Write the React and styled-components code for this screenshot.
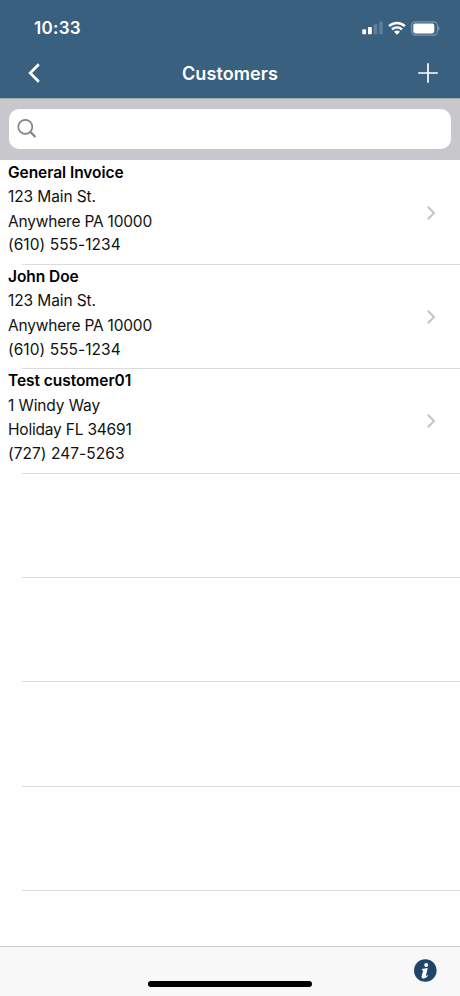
import styled, { createGlobalStyle } from 'styled-components'

const GlobalStyle = createGlobalStyle`
  * {
    box-sizing: border-box;
  }
  body {
    margin: 0;
    background: #fff;
    font-family: Inter, 'Liberation Sans', sans-serif;
  }
`

const Screen = styled.div`
  display: flex;
  flex-direction: column;
  width: 460px;
  height: 996px;
  overflow: hidden;
  background: #fff;
`

const Header = styled.header`
  height: 98px;
  flex: none;
  background: #3a6080;
  color: #fff;
`

const StatusBar = styled.div`
  display: flex;
  align-items: center;
  justify-content: space-between;
  height: 48px;
  padding: 8px 20px 0 34px;
`

const Time = styled.span`
  font-size: 17px;
  font-weight: 600;
  line-height: 20px;
  letter-spacing: 0.3px;
`

const StatusIcons = styled.div`
  display: flex;
  align-items: center;
  gap: 5px;
`

const NavBar = styled.nav`
  display: grid;
  grid-template-columns: 60px 1fr 60px;
  align-items: center;
  height: 50px;
`

const NavButton = styled.button`
  display: flex;
  justify-content: ${({ $end }) => ($end ? 'flex-end' : 'flex-start')};
  padding: ${({ $end }) => ($end ? '0 22px 0 0' : '0 0 0 28px')};
  border: 0;
  background: none;
  color: inherit;
`

const Title = styled.h1`
  margin: 0;
  padding-top: 2px;
  font-size: 18px;
  font-weight: 600;
  line-height: 24px;
  letter-spacing: 0.1px;
  text-align: center;
`

const SearchBar = styled.div`
  height: 62px;
  flex: none;
  padding: 10px 9px 11px;
  border-top: 1px solid #a9adb2;
  background: #c8c8cc;
`

const SearchField = styled.label`
  display: flex;
  align-items: center;
  height: 40px;
  padding-left: 8px;
  border-radius: 10px;
  background: #fff;
`

const SearchInput = styled.input`
  flex: 1;
  height: 100%;
  border: 0;
  outline: 0;
  background: transparent;
  font: inherit;
`

const List = styled.ul`
  flex: 1;
  min-height: 0;
  margin: 0;
  padding: 0.5px 0 0;
  overflow: hidden;
  list-style: none;
`

const Row = styled.li`
  display: flex;
  align-items: center;
  justify-content: space-between;
  height: 104.4px;
  padding: 0 24px 0 8px;
  background: linear-gradient(#dcdcde, #dcdcde) 22px 100% / 100% 1px no-repeat;
`

const Details = styled.div`
  align-self: flex-start;
  color: #111;
  font-size: 15.5px;
  line-height: 24.6px;
  white-space: nowrap;
`

const Name = styled.div`
  color: #000;
  font-weight: 600;
  letter-spacing: -0.05px;
`

const Line = styled.div`
  letter-spacing: ${({ $spacing }) => $spacing || '-0.1px'};
`

const Phone = styled.div`
  line-height: 21px;
  letter-spacing: 0.05px;
`

const Footer = styled.footer`
  display: grid;
  grid-template-columns: 1fr 164px 1fr;
  height: 50px;
  flex: none;
  border-top: 1px solid #c9c9cb;
  background: #f8f8f8;
`

const HomeIndicator = styled.div`
  grid-column: 2;
  align-self: end;
  height: 6px;
  margin-bottom: 9px;
  border-radius: 3px;
  background: #000;
`

const InfoButton = styled.button`
  display: flex;
  align-self: start;
  justify-self: end;
  margin: 12px 23px 0 0;
  padding: 0;
  border: 0;
  background: none;
`

const customers = [
  { name: 'General Invoice', street: '123 Main St.', city: 'Anywhere PA 10000', phone: '(610) 555-1234' },
  { name: 'John Doe', street: '123 Main St.', city: 'Anywhere PA 10000', phone: '(610) 555-1234' },
  { name: 'Test customer01', street: '1 Windy Way', city: 'Holiday FL 34691', phone: '(727) 247-5263' },
]

const emptyRows = [1, 2, 3, 4]

const SignalIcon = () => (
  <svg width="21" height="14" viewBox="0 0 21 14" fill="#fff">
    <rect x="0.3" y="8.3" width="3.8" height="5" rx="0.9" />
    <rect x="6" y="5.9" width="3.8" height="7.4" rx="0.9" />
    <rect x="11.7" y="3.2" width="3.6" height="10.1" rx="0.9" opacity="0.2" />
    <rect x="17.2" y="0.6" width="3.6" height="12.7" rx="0.9" opacity="0.2" />
  </svg>
)

const WifiIcon = () => (
  <svg width="18" height="14" viewBox="0 0 18 14" fill="none" stroke="#fff" strokeWidth="2.6">
    <path d="M1.1 5.1C5.5 0.9 12.5 0.9 16.9 5.1" />
    <path d="M4 8.4C6.9 5.8 11.1 5.8 14 8.4" />
    <path d="M9 13.7L6 10.7C7.8 9.2 10.2 9.2 12 10.7Z" fill="#fff" stroke="none" />
  </svg>
)

const BatteryIcon = () => (
  <svg width="29" height="15" viewBox="0 0 29 15">
    <rect x="0.6" y="0.9" width="25.8" height="13.2" rx="3.6" fill="none" stroke="#fff" strokeOpacity="0.35" strokeWidth="1.1" />
    <rect x="2.3" y="2.6" width="21" height="9.8" rx="1.8" fill="#fff" />
    <path d="M27.4 5.2C28.8 5.8 28.8 9 27.4 9.7Z" fill="#fff" opacity="0.45" />
  </svg>
)

const BackIcon = () => (
  <svg width="13" height="20" viewBox="0 0 13 20" fill="none" stroke="#fff" strokeWidth="2.7">
    <path d="M10.8 1.2L2.2 10L10.8 18.8" />
  </svg>
)

const PlusIcon = () => (
  <svg width="20" height="20" viewBox="0 0 20 20" fill="none" stroke="#fff" strokeWidth="1.7">
    <path d="M10 0.2V19.8M0.2 10H19.8" />
  </svg>
)

const SearchIcon = () => (
  <svg width="20" height="20" viewBox="0 0 20 20" fill="none" stroke="#858588">
    <circle cx="8.3" cy="7.9" r="7" strokeWidth="1.7" />
    <path d="M13.2 12.8L18.4 18" strokeWidth="2.3" />
  </svg>
)

const Chevron = () => (
  <svg width="10" height="14" viewBox="0 0 10 14" fill="none" stroke="#c4c4c7" strokeWidth="2">
    <path d="M1.8 0.8L8 7L1.8 13.2" />
  </svg>
)

const InfoIcon = () => (
  <svg width="24" height="24" viewBox="0 0 24 24">
    <circle cx="12.3" cy="11.5" r="11.3" fill="#20456b" />
    <circle cx="13.2" cy="5.9" r="2" fill="#fff" />
    <path
      d="M8.9 10.1L14.7 9.1L13 16.3C12.8 17.2 13.4 17.1 14.6 16L15.2 16.6C13.4 18.9 11.7 19.8 10.1 19.5C8.6 19.3 8.4 18 8.8 16.5L10.2 11.4L8.7 11Z"
      fill="#fff"
    />
  </svg>
)

const App = () => {
  return (
    <>
      <GlobalStyle />
      <Screen>
        <Header>
          <StatusBar>
            <Time>10:33</Time>
            <StatusIcons>
              <SignalIcon />
              <WifiIcon />
              <BatteryIcon />
            </StatusIcons>
          </StatusBar>
          <NavBar>
            <NavButton aria-label="Back"><BackIcon /></NavButton>
            <Title>Customers</Title>
            <NavButton $end aria-label="Add customer"><PlusIcon /></NavButton>
          </NavBar>
        </Header>

        <SearchBar>
          <SearchField>
            <SearchIcon />
            <SearchInput type="text" aria-label="Search" />
          </SearchField>
        </SearchBar>

        <List>
          {customers.map((customer) => (
            <Row key={customer.name}>
              <Details>
                <Name>{customer.name}</Name>
                <Line>{customer.street}</Line>
                <Line $spacing="-0.2px">{customer.city}</Line>
                <Phone>{customer.phone}</Phone>
              </Details>
              <Chevron />
            </Row>
          ))}
          {emptyRows.map((row) => (
            <Row key={row} />
          ))}
        </List>

        <Footer>
          <HomeIndicator />
          <InfoButton aria-label="Info"><InfoIcon /></InfoButton>
        </Footer>
      </Screen>
    </>
  )
}

export default App
